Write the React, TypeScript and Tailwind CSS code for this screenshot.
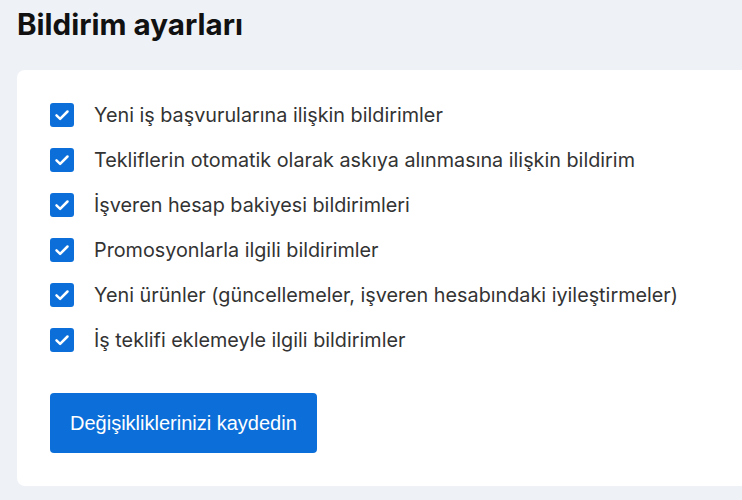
import React from 'react';

const items = [
  'Yeni iş başvurularına ilişkin bildirimler',
  'Tekliflerin otomatik olarak askıya alınmasına ilişkin bildirim',
  'İşveren hesap bakiyesi bildirimleri',
  'Promosyonlarla ilgili bildirimler',
  'Yeni ürünler (güncellemeler, işveren hesabındaki iyileştirmeler)',
  'İş teklifi eklemeyle ilgili bildirimler',
];

const Check = () => (
  <span className="flex h-6 w-6 shrink-0 items-center justify-center rounded-[3px] bg-[#0c6fd9]">
    <svg viewBox="0 0 16 16" className="h-5 w-5" fill="none">
      <path d="M3.6 8.3l2.9 2.8 5.9-5.9" stroke="white" strokeWidth="2" strokeLinecap="round" strokeLinejoin="round" />
    </svg>
  </span>
);

export default function App() {
  return (
    <div className="h-[500px] w-[742px] overflow-hidden bg-[#eef1f6] pl-[17px] font-['Inter',sans-serif]">
      <h1 className="pt-[4px] text-[29.6px] font-bold leading-[40px] text-[#111]">Bildirim ayarları</h1>
      <div className="mt-[26px] w-[760px] rounded-lg bg-white pb-[33px] pl-[33px] pt-[33px]">
        <div className="flex flex-col gap-[21px]">
          {items.map((t) => (
            <label key={t} className="flex items-center gap-[20px]">
              <Check />
              <span className="text-[19.8px] leading-6 text-[#333]">{t}</span>
            </label>
          ))}
        </div>
        <button className="mt-[41px] h-[60px] rounded-[4px] bg-[#0c6fd9] px-[20px] font-['Liberation_Sans',sans-serif] text-[20px] text-white">
          Değişikliklerinizi kaydedin
        </button>
      </div>
    </div>
  );
}
